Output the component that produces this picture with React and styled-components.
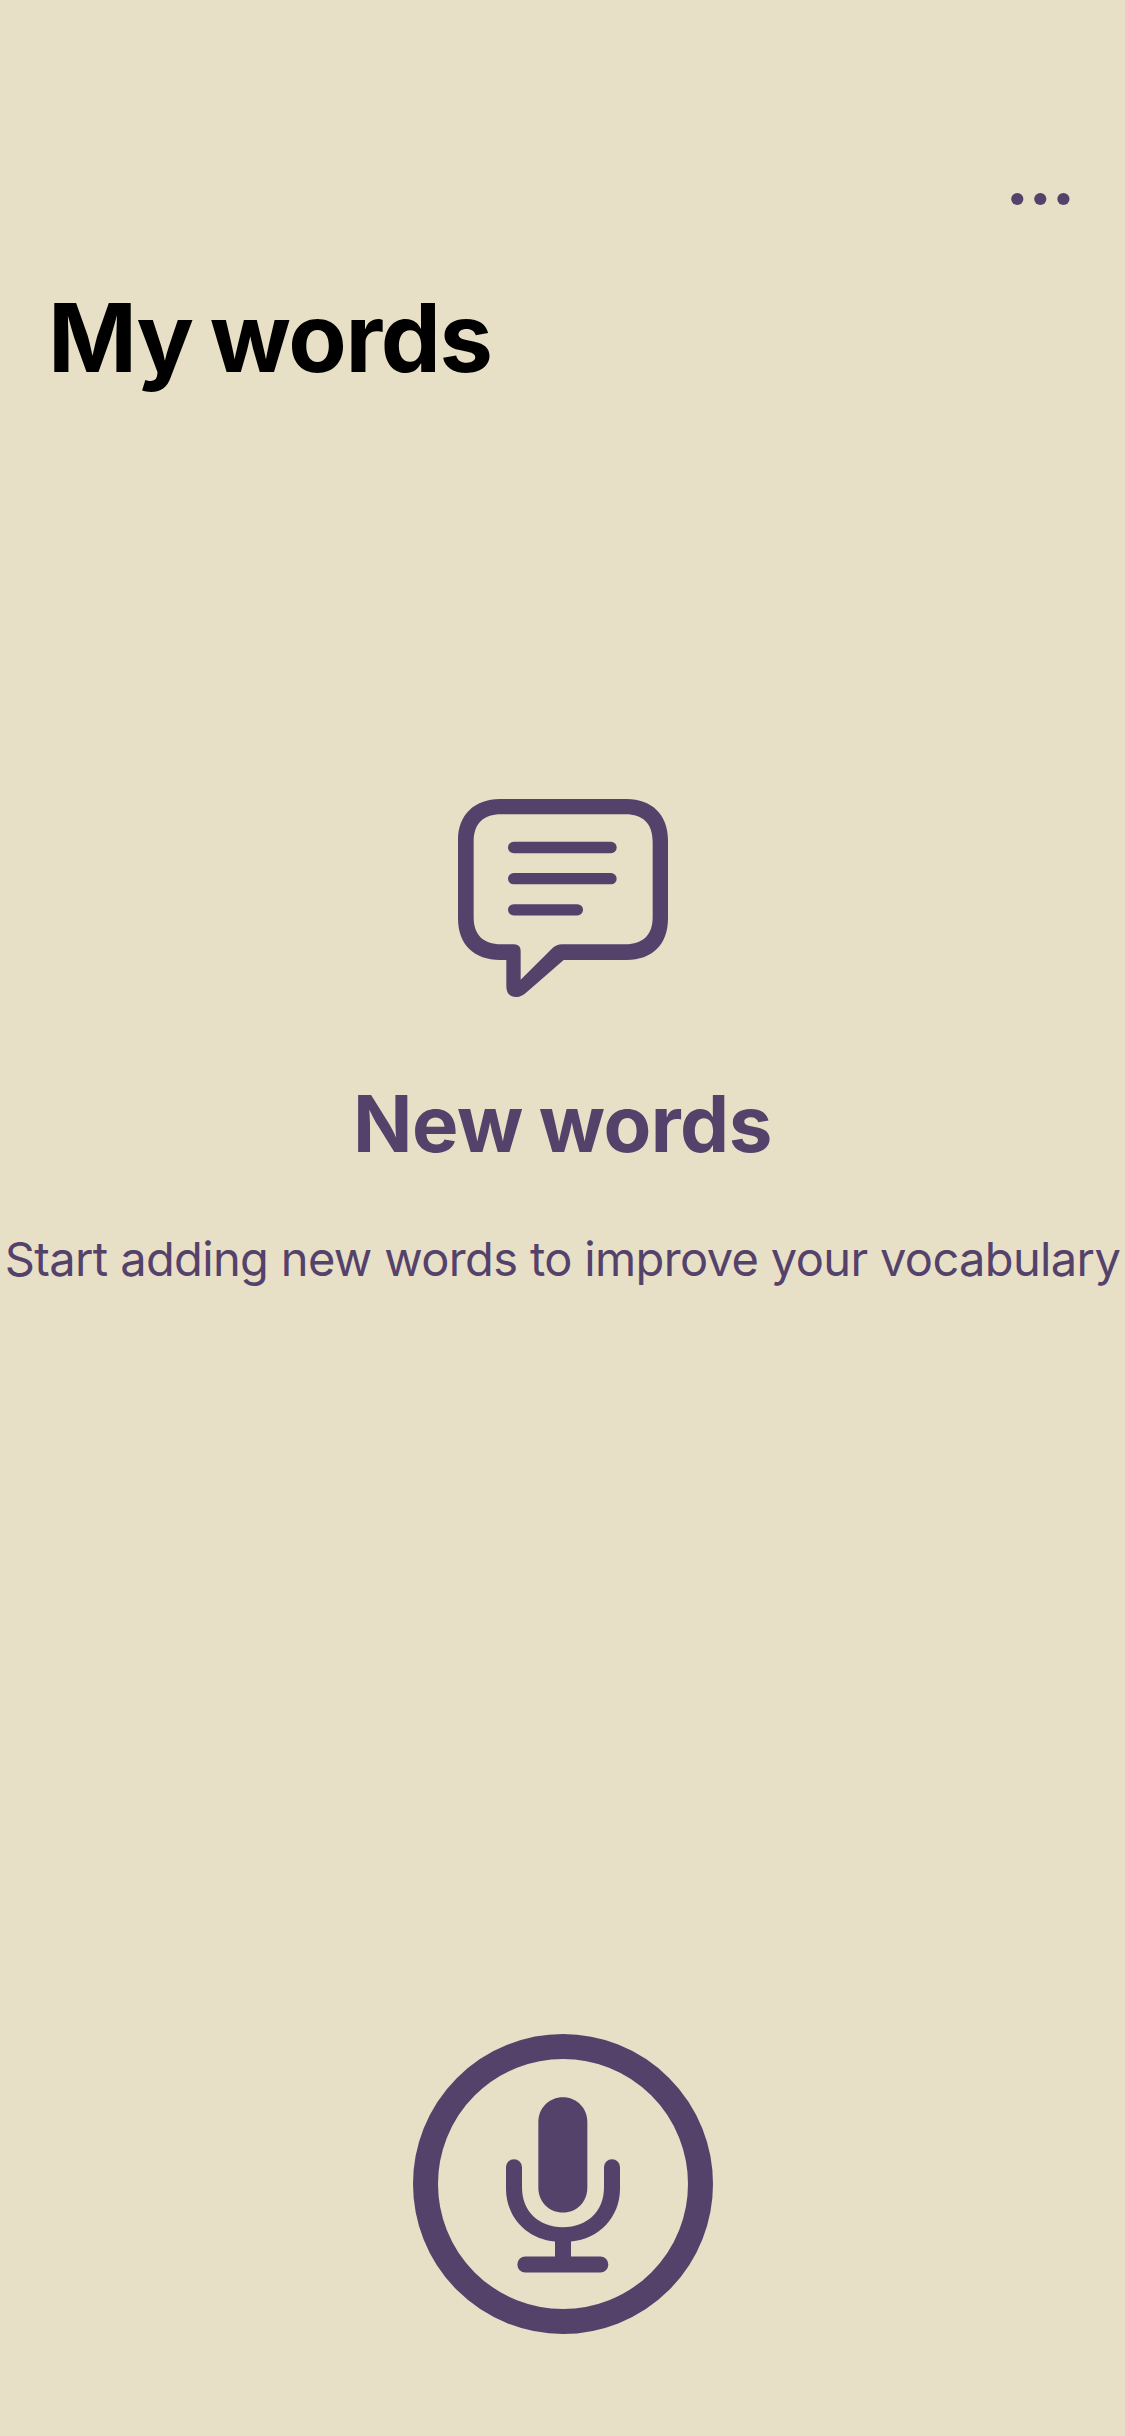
import React from "react";
import styled, { createGlobalStyle, ThemeProvider } from "styled-components";

const theme = {
  background: "#e7dfc6",
  accent: "#54426b",
  title: "#000000",
  font: '"Inter", "Liberation Sans", sans-serif',
};

const GlobalStyle = createGlobalStyle`
  *, *::before, *::after { box-sizing: border-box; }
  body { margin: 0; background: ${theme.background}; }
`;

const Screen = styled.main`
  display: flex;
  flex-direction: column;
  width: 1125px;
  height: 2436px;
  overflow: hidden;
  background: ${(p) => p.theme.background};
  color: ${(p) => p.theme.accent};
  font-family: ${(p) => p.theme.font};
`;

const NavBar = styled.header`
  display: flex;
  align-items: center;
  justify-content: flex-end;
  height: 132px;
  margin-top: 133px;
  padding-right: 55px;
`;

const MenuButton = styled.button`
  display: flex;
  padding: 0;
  border: 0;
  background: none;
  color: inherit;
`;

const Title = styled.h1`
  margin: 12px 0 0;
  padding-left: 48px;
  color: ${(p) => p.theme.title};
  font-size: 95.5px;
  font-weight: 700;
  line-height: 120px;
  letter-spacing: -1.4px;
  word-spacing: -4px;
`;

const EmptyState = styled.section`
  display: flex;
  flex-direction: column;
  align-items: center;
  margin-top: 402px;
`;

const IconWrap = styled.div`
  display: flex;
  padding-left: 1px;
`;

const Heading = styled.h2`
  margin: 77px 0 0;
  font-size: 78px;
  font-weight: 700;
  line-height: 100px;
  letter-spacing: -0.5px;
  word-spacing: -2px;
`;

const Message = styled.p`
  margin: 53px 0 0;
  font-size: 47px;
  font-weight: 400;
  line-height: 64px;
  letter-spacing: -0.64px;
  white-space: nowrap;
`;

const Footer = styled.footer`
  display: flex;
  justify-content: center;
  margin-top: auto;
  padding: 0 0 102px 1px;
`;

const RecordButton = styled.button`
  display: flex;
  padding: 0;
  border: 0;
  border-radius: 50%;
  background: none;
  color: inherit;
`;

const Icon = styled.svg`
  display: block;
  flex: none;
`;

const MoreIcon = () => (
  <Icon width="60" height="14" viewBox="0 0 60 14" fill="currentColor">
    <circle cx="7.3" cy="7" r="6.1" />
    <circle cx="30.3" cy="7" r="6.1" />
    <circle cx="53.4" cy="7" r="6.1" />
  </Icon>
);

const BubbleIcon = () => (
  <Icon width="210" height="198" viewBox="54 57 630 594" fill="currentColor">
    <path
      fillRule="evenodd"
      d="M180 57H560C636 57 684 105 684 180V415C684 495 636 540 560 540H371L265 632Q245 651 229 651Q199 651 199 617V540H180C103 540 54 495 54 415V180C54 105 103 57 180 57Z
         M183 103C130 103 101 131 101 185V412C101 465 130 493 183 493H222Q242 493 242 513V599L334 508Q348 493 367 493H556C609 493 638 465 638 412V185C638 131 609 103 556 103Z"
    />
    <rect x="204" y="185.500" width="326" height="34" rx="17" />
    <rect x="204" y="279" width="326" height="34" rx="17" />
    <rect x="204" y="372.500" width="225" height="34" rx="17" />
  </Icon>
);

const MicIcon = () => (
  <Icon width="300" height="300" viewBox="39 41.5 900 900" fill="none" stroke="currentColor">
    <circle cx="489" cy="491.5" r="412.5" strokeWidth="75" />
    <path
      fill="currentColor"
      stroke="none"
      d="M489 231C530 231 562 263 562 306V502C562 546 530 577 489 577C447 577 415 546 415 502V306C415 263 447 231 489 231Z"
    />
    <path
      fill="currentColor"
      stroke="none"
      d="M318 441A24 24 0 0 1 366 441V502C366 573 416 621 489 621C562 621 612 573 612 502V441A24 24 0 0 1 660 441V506C660 591 597 658 513 664V709H601A24 24 0 0 1 601 757H376A24 24 0 0 1 376 709H465V664C381 658 318 591 318 506Z"
    />
  </Icon>
);

export default function App() {
  return (
    <ThemeProvider theme={theme}>
      <GlobalStyle />
      <Screen>
        <NavBar>
          <MenuButton aria-label="More">
            <MoreIcon />
          </MenuButton>
        </NavBar>
        <Title>My words</Title>
        <EmptyState>
          <IconWrap>
            <BubbleIcon />
          </IconWrap>
          <Heading>New words</Heading>
          <Message>Start adding new words to improve your vocabulary</Message>
        </EmptyState>
        <Footer>
          <RecordButton aria-label="Record">
            <MicIcon />
          </RecordButton>
        </Footer>
      </Screen>
    </ThemeProvider>
  );
}
